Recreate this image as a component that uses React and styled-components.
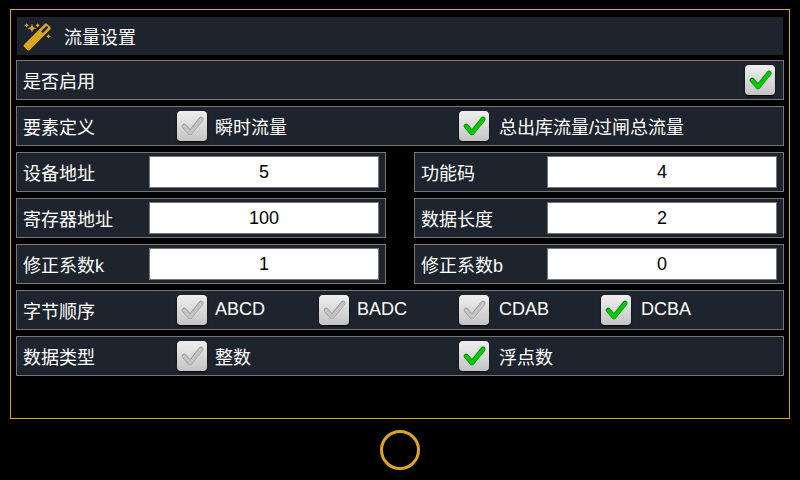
import { useState } from "react";
import styled, { createGlobalStyle } from "styled-components";

const elements = ['瞬时流量', '总出库流量/过闸总流量'];
const orders = ['ABCD', 'BADC', 'CDAB', 'DCBA'];
const types = ['整数', '浮点数'];

const fields = [
    { id: 'address', label: '设备地址', value: '5' },
    { id: 'code', label: '功能码', value: '4' },
    { id: 'register', label: '寄存器地址', value: '100' },
    { id: 'length', label: '数据长度', value: '2' },
    { id: 'k', label: '修正系数k', value: '1' },
    { id: 'b', label: '修正系数b', value: '0' },
];

export default function App() {
    const [enabled, setEnabled] = useState(true);
    const [element, setElement] = useState(1);
    const [order, setOrder] = useState(3);
    const [type, setType] = useState(1);
    const [values, setValues] = useState(fields.map((f) => f.value));

    function handleValue(index, value) {
        setValues(values.map((v, i) => (i === index ? value : v)));
    }

    return (
        <Page>
            <GlobalStyle />
            <Frame>
                <TitleBar>
                    <WandIcon />
                    <Title>流量设置</Title>
                </TitleBar>

                <Rows>
                    <SwitchRow>
                        <RowLabel as="label" htmlFor="enabled">是否启用</RowLabel>
                        <Check id="enabled" type="checkbox" checked={enabled} onChange={() => setEnabled(!enabled)} />
                    </SwitchRow>

                    <OptionRow label="要素定义" name="element" options={elements} selected={element} onSelect={setElement} />

                    <Fields>
                        {fields.map((field, i) => (
                            <Row key={field.id}>
                                <FieldLabel htmlFor={field.id}>{field.label}</FieldLabel>
                                <Input
                                    id={field.id}
                                    type="text"
                                    value={values[i]}
                                    onChange={(e) => handleValue(i, e.target.value)}
                                />
                            </Row>
                        ))}
                    </Fields>

                    <OptionRow latin label="字节顺序" name="order" options={orders} selected={order} onSelect={setOrder} />
                    <OptionRow label="数据类型" name="type" options={types} selected={type} onSelect={setType} />
                </Rows>
            </Frame>
            <HomeButton type="button" aria-label="Home" />
        </Page>
    )
}

function OptionRow({ label, name, options, selected, onSelect, latin }) {
    const span = 4 / options.length;

    return (
        <Row role="radiogroup" aria-label={label}>
            <RowLabel>{label}</RowLabel>
            <Options>
                {options.map((option, i) => (
                    <Option key={option} $span={span} $wide={i >= options.length / 2}>
                        <Check type="radio" name={name} checked={selected === i} onChange={() => onSelect(i)} />
                        <OptionText $latin={latin}>{option}</OptionText>
                    </Option>
                ))}
            </Options>
        </Row>
    )
}

function Check(props) {
    return (
        <CheckBox>
            <CheckInput {...props} />
            <CheckMark viewBox="0 0 30 30" $on={props.checked}>
                <path className="light" d="M7.6 16.3 L13.2 22.7 L24.4 9.2" />
                <path className="edge" d="M7.2 15.2 L13 21.8 L24.1 8.2" />
                <path className="fill" d="M7.4 15.5 L13 22 L24.1 8.6" />
            </CheckMark>
        </CheckBox>
    )
}

function WandIcon() {
    return (
        <Wand viewBox="0 0 28 28" aria-hidden="true">
            <rect x="-2" y="10.2" width="32.5" height="7.8" rx="1.8" transform="rotate(-45 14 14.1)" />
            <path className="slit" d="M19.6 8.6 L23.8 4.4" />
            <path d="M9 .8 L10.2 4 L13.4 5.2 L10.2 6.4 L9 9.6 L7.8 6.4 L4.6 5.2 L7.8 4 Z" />
            <path d="M3.6 .2 L4.5 1.5 L5.8 2.4 L4.5 3.3 L3.6 4.6 L2.7 3.3 L1.4 2.4 L2.7 1.5 Z" />
            <path d="M14.6 .2 L15.5 1.5 L16.8 2.4 L15.5 3.3 L14.6 4.6 L13.7 3.3 L12.4 2.4 L13.7 1.5 Z" />
            <path d="M25.5 11.2 L26.4 12.5 L27.7 13.4 L26.4 14.3 L25.5 15.6 L24.6 14.3 L23.3 13.4 L24.6 12.5 Z" />
        </Wand>
    )
}

const GlobalStyle = createGlobalStyle`
    * {
        box-sizing: border-box;
    }
    body {
        margin: 0;
        background: #000000;
    }
`

const Page = styled.main`
    display: flex;
    flex-direction: column;
    align-items: center;
    gap: 11px;
    padding: 9px 10px;

    font-family: 'Liberation Sans', 'Noto Sans CJK SC', sans-serif;
    font-size: 18px;
    line-height: 24px;
    color: #FFFFFF;
`

const Frame = styled.section`
    width: 100%;
    padding: 6px 5px 42px;
    border: 1px solid #DAA520;
`

const TitleBar = styled.header`
    display: flex;
    align-items: center;
    gap: 13px;
    height: 38px;
    margin: 1px 1px 5px;
    padding: 0 6px;
    background: #1E242D;
`

const Title = styled.h1`
    margin: 0;
    padding-top: 4px;
    font-size: 18px;
    font-weight: 400;
`

const Wand = styled.svg`
    width: 28px;
    height: 28px;
    margin-top: 2px;
    fill: #DAA520;

    .slit {
        stroke: #1E242D;
        stroke-width: 2.4;
        stroke-linecap: round;
    }
`

const Rows = styled.div`
    display: flex;
    flex-direction: column;
    gap: 6px;
`

const Row = styled.div`
    display: flex;
    align-items: center;
    height: 40px;
    padding: 0 6px;
    border: 1px solid #767676;
    background: #1E242D;
`

const SwitchRow = styled(Row)`
    justify-content: space-between;
    padding-right: 8px;
`

const RowLabel = styled.span`
    flex: 0 0 154px;
    padding-top: 4px;
`

const FieldLabel = styled.label`
    flex: 0 0 126px;
    padding-top: 4px;
`

const Fields = styled.div`
    display: grid;
    grid-template-columns: repeat(2, minmax(0, 1fr));
    gap: 6px 28px;
`

const Input = styled.input`
    flex: 1;
    min-width: 0;
    height: 32px;
    padding: 0 2px;
    border: 1px solid #767676;
    background: #FFFFFF;
    color: #000000;
    font-family: inherit;
    font-size: 18px;
    text-align: center;
`

const Options = styled.div`
    flex: 1;
    display: grid;
    grid-template-columns: 71fr 70fr 71fr 70fr;
    padding-right: 36px;
`

const Option = styled.label`
    grid-column: span ${(props) => props.$span};
    display: flex;
    align-items: center;
    gap: ${(props) => (props.$wide ? '10px' : '8px')};
`

const OptionText = styled.span`
    padding: ${(props) => (props.$latin ? '0 0 2px' : '4px 0 0')};
    white-space: nowrap;
`

const CheckBox = styled.span`
    position: relative;
    flex: none;
    width: 30px;
    height: 30px;
`

const CheckInput = styled.input`
    appearance: none;
    display: block;
    width: 30px;
    height: 30px;
    margin: 0;
    border-radius: 4px;
    background: linear-gradient(#EFEFEF, #C4C4C4);
    box-shadow: 0 1px 2px #000000;
    cursor: pointer;
`

const CheckMark = styled.svg`
    position: absolute;
    inset: 0;
    width: 30px;
    height: 30px;
    fill: none;
    stroke-linecap: round;
    stroke-linejoin: round;
    pointer-events: none;

    .light {
        stroke: #E6E6E6;
        stroke-width: 4;
    }
    .edge {
        stroke: ${(props) => (props.$on ? '#0A8A0A' : '#A2A2A2')};
        stroke-width: 5;
    }
    .fill {
        stroke: ${(props) => (props.$on ? '#06CC06' : '#C4C4C4')};
        stroke-width: 3.4;
    }
`

const HomeButton = styled.button`
    width: 40px;
    height: 40px;
    padding: 0;
    border: 3px solid #DAA520;
    border-radius: 50%;
    background: transparent;
    cursor: pointer;
`
